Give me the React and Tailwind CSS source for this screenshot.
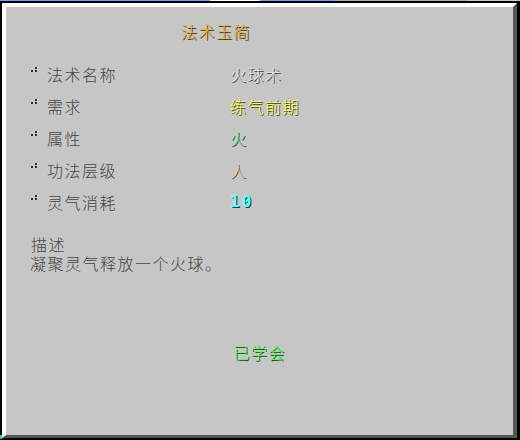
import React from "react";

const Dot = () => (
  <svg width="7" height="6" viewBox="0 0 7 6" className="shrink-0" style={{ shapeRendering: "crispEdges" }}>
    <rect x="4" y="0" width="2" height="2" fill="#2e2e2e" />
    <rect x="0" y="3" width="2" height="2" fill="#2e2e2e" />
    <rect x="4" y="3" width="2" height="2" fill="#2e2e2e" />
  </svg>
);

const rows = [
  { label: "法术名称", value: "火球术", cls: "text-[#e4e4e4] [text-shadow:1px_1px_0_#3a3a3a]" },
  { label: "需求", value: "练气前期", cls: "text-[#ffff55] [text-shadow:1px_1px_0_#3f3f15]" },
  { label: "属性", value: "火", cls: "text-[#70e4a4] [text-shadow:1px_1px_0_#1c3a28]" },
  { label: "功法层级", value: "人", cls: "text-[#ffcc88] [text-shadow:1px_1px_0_#403322]" },
];

export default function App() {
  return (
    <div
      className="relative w-[520px] h-[440px] overflow-hidden bg-[#c6c6c6] text-[16px] leading-4 tracking-[1.5px] text-[#454545]"
      style={{ fontFamily: '"Noto Sans CJK SC", "Noto Sans", sans-serif', fontWeight: 300 }}
    >
      <div className="flex h-px w-full">
        <div className="w-[210px] bg-[#7b9cf8]" />
        <div className="w-[50px] bg-white" />
        <div className="w-[73px] bg-[#7b9cf8]" />
        <div className="w-[134px] bg-[#a8acb8]" />
        <div className="flex-1 bg-[#c8ccd4]" />
      </div>
      <div className="h-[439px] border-l-2 border-t-2 border-r-[3px] border-b-2 border-black">
        <div className="h-full border-l-4 border-t-4 border-white border-r-4 border-b-[3px] border-r-[#555555] border-b-[#555555] bg-[#c6c6c6]">
          <div className="flex flex-col">
            <div className="mt-[16px] pl-[175px] text-[#ecb53c] [text-shadow:1px_1px_0_#3a2c00]">法术玉简</div>

            <div className="mt-[27px] flex flex-col gap-4 pl-[25px]">
              {rows.map((r) => (
                <div key={r.label} className="flex h-4 items-center">
                  <div className="flex w-[16px] items-start self-start pt-[1px]">
                    <Dot />
                  </div>
                  <div className="w-[183px]">{r.label}</div>
                  <div className={r.cls}>{r.value}</div>
                </div>
              ))}
              <div className="flex h-4 items-center">
                <div className="flex w-[16px] items-start self-start pt-[1px]">
                  <Dot />
                </div>
                <div className="w-[183px]">灵气消耗</div>
                <div
                  className="font-bold text-[#55ffff] [text-shadow:1px_1px_0_#153f3f] tracking-[2px]"
                  style={{ fontFamily: '"DejaVu Sans Mono", monospace' }}
                >
                  10
                </div>
              </div>
            </div>

            <div className="mt-[25px] pl-[25px] leading-[19px]">描述</div>
            <div className="pl-[24px] leading-[19px]">凝聚灵气释放一个火球。</div>

            <div className="mt-[71px] text-center text-[#55ff55] [text-shadow:1px_1px_0_#153f15]">已学会</div>
          </div>
        </div>
      </div>
      <div className="absolute left-0 top-[435px] h-[4px] w-[2px] bg-[#2bd38a]" />
    </div>
  );
}
